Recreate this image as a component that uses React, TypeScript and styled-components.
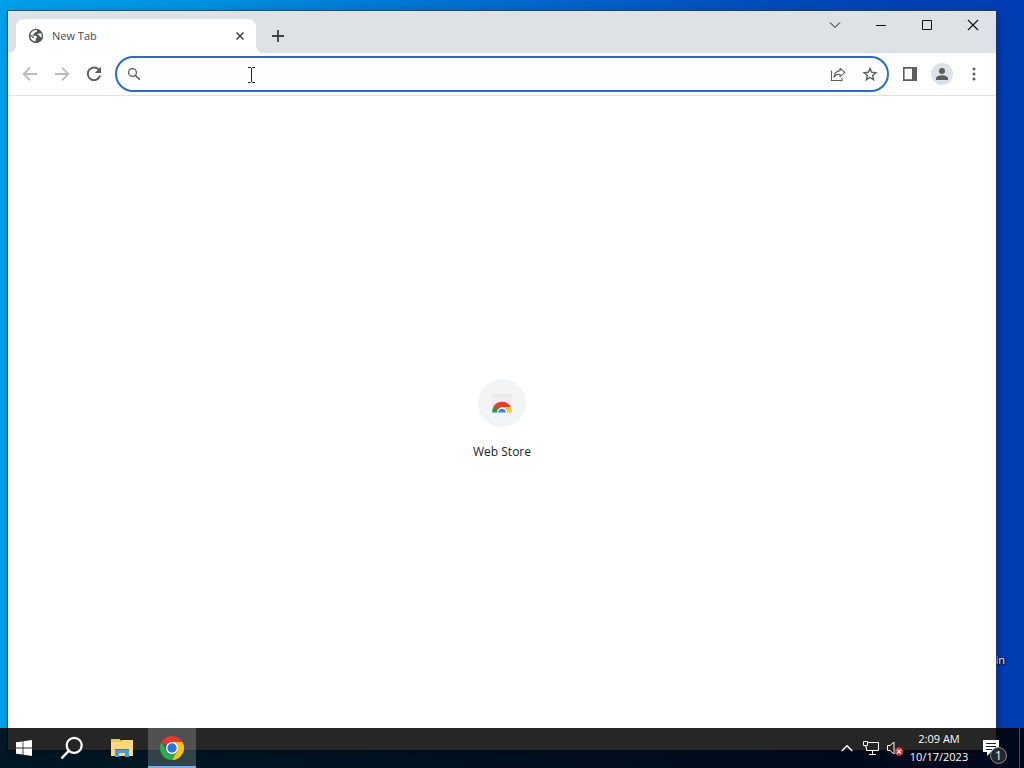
import React from "react";
import styled, { createGlobalStyle } from "styled-components";

const GlobalStyle = createGlobalStyle`
  * { box-sizing: border-box; }
  body { margin: 0; font-family: "Open Sans", "Noto Sans", sans-serif; }
  button, input { font: inherit; color: inherit; border: 0; padding: 0; background: none; }
  svg { display: block; }
`;

const Desktop = styled.div`
  position: relative;
  display: flex;
  flex-direction: column;
  min-height: 100vh;
  overflow: hidden;
  background: linear-gradient(90deg, #00a0ea 0%, #0092e0 18%, #007ad4 36%, #0060c8 58%, #0048b8 78%, #003cb2 100%);
`;

const ShortcutLabel = styled.span`
  position: absolute;
  top: 652px;
  right: 19px;
  font-size: 11px;
  line-height: 16px;
  color: #fff;
  text-shadow: 1px 1px 2px #000, 0 0 2px #000;
`;

const Window = styled.main`
  position: relative;
  display: flex;
  flex-direction: column;
  flex: 1;
  margin: 11px 28px -22px 8px;
  background: #fff;
  box-shadow: 0 0 0 1px rgba(50, 60, 80, 0.65), 2px 2px 8px rgba(0, 0, 40, 0.35);
`;

const TabStrip = styled.header`
  display: flex;
  align-items: flex-end;
  height: 42px;
  padding-left: 8px;
  background: #dee1e6;
`;

const Tab = styled.div`
  position: relative;
  display: flex;
  align-items: center;
  gap: 8px;
  width: 240px;
  height: 34px;
  padding: 0 8px 0 12px;
  border-radius: 8px 8px 0 0;
  background: #fff;
  color: #45484d;
  line-height: 16px;

  &::before,
  &::after {
    content: "";
    position: absolute;
    bottom: 0;
    width: 8px;
    height: 8px;
  }
  &::before {
    left: -8px;
    background: radial-gradient(circle at 0 0, transparent 8px, #fff 8px);
  }
  &::after {
    right: -8px;
    background: radial-gradient(circle at 100% 0, transparent 8px, #fff 8px);
  }
`;

const TabTitle = styled.span`
  flex: 1;
  font-size: 11px;
`;

const IconButton = styled.button<{ $size?: number; $tone?: string }>`
  display: flex;
  flex: none;
  align-items: center;
  justify-content: center;
  width: ${(p) => p.$size ?? 32}px;
  height: ${(p) => p.$size ?? 32}px;
  color: ${(p) => p.$tone ?? "#5a5d62"};
`;

const NewTabButton = styled(IconButton)`
  margin: 0 0 1px 6px;
`;

const Captions = styled.div`
  display: flex;
  align-self: flex-start;
  margin-left: auto;
`;

const CaptionButton = styled.button`
  display: flex;
  align-items: center;
  justify-content: center;
  width: 46px;
  height: 28px;
  color: #111;
`;

const Toolbar = styled.nav`
  display: flex;
  align-items: center;
  height: 43px;
  padding: 0 6px;
  border-bottom: 1px solid #dfe1e5;
`;

const Omnibox = styled.label`
  display: flex;
  flex: 1;
  align-items: center;
  height: 36px;
  margin: 0 5px;
  padding: 0 1px 0 10px;
  border: 2px solid #2b6cc4;
  border-radius: 18px;
  color: #5a5d62;
`;

const Address = styled.input`
  flex: 1;
  min-width: 0;
  height: 28px;
  margin-left: 8px;
  outline: none;
  font-size: 13px;
`;

const Avatar = styled.span`
  display: flex;
  align-items: center;
  justify-content: center;
  width: 22px;
  height: 22px;
  border-radius: 50%;
  background: #dee1e6;
`;

const Page = styled.section`
  display: flex;
  flex: 1;
  align-items: center;
  justify-content: center;
  padding-bottom: 8px;
`;

const StoreLink = styled.a`
  display: flex;
  flex-direction: column;
  align-items: center;
  gap: 17px;
  color: #202124;
  font-size: 12px;
  line-height: 16px;
  text-decoration: none;
`;

const StoreTile = styled.span`
  display: flex;
  align-items: center;
  justify-content: center;
  width: 48px;
  height: 48px;
  border-radius: 50%;
  background: #f3f4f6;
`;

const TextCursor = styled.svg`
  position: absolute;
  left: 239px;
  top: 56px;
  pointer-events: none;
`;

const Taskbar = styled.footer`
  position: relative;
  display: flex;
  height: 40px;
  background: rgba(0, 0, 0, 0.85);
  color: #fff;
`;

const TaskButton = styled.button<{ $active?: boolean }>`
  display: flex;
  align-items: center;
  justify-content: center;
  width: 48px;
  height: 40px;
  background: ${(p) => (p.$active ? "rgba(255, 255, 255, 0.2)" : "none")};
  box-shadow: ${(p) => (p.$active ? "inset 0 -2px #76b0e6" : "none")};
  color: #fff;
`;

const TaskGroup = styled.div`
  display: flex;
  gap: 2px;
  margin-left: 2px;
`;

const Tray = styled.div`
  display: flex;
  align-items: center;
  margin-left: auto;
`;

const TrayButton = styled.button`
  display: flex;
  align-items: center;
  justify-content: center;
  width: 24px;
  height: 40px;
  color: #fff;
`;

const Clock = styled.button`
  width: 64px;
  font-size: 11px;
  line-height: 18px;
  text-align: center;
  white-space: nowrap;
  color: #fff;
`;

const Notifications = styled(TrayButton)`
  position: relative;
  width: 48px;
  padding-right: 8px;
`;

const Badge = styled.span`
  position: absolute;
  right: 12px;
  bottom: 4px;
  width: 17px;
  height: 17px;
  border: 1px solid #8b9097;
  border-radius: 50%;
  background: #26282d;
  font-size: 12px;
  line-height: 15px;
  text-align: center;
`;

const ShowDesktop = styled.button`
  width: 5px;
  height: 40px;
  border-left: 1px solid #4a5360;
`;

const ChromeLogo = () => (
  <svg width="24" height="24" viewBox="0 0 48 48" aria-hidden="true">
    <path fill="#e33b2e" d="M24 24 3.2 12A24 24 0 0 1 44.8 12H24z" />
    <path fill="#fbc116" d="M24 12h20.8A24 24 0 0 1 24 48l10.4-18z" />
    <path fill="#2da94f" d="M3.2 12 13.6 30 24 36 24 48A24 24 0 0 1 3.2 12z" />
    <path fill="#2da94f" d="M24 48 34.4 30 24 34 13.6 30z" />
    <circle cx="24" cy="24" r="12" fill="#fff" />
    <circle cx="24" cy="24" r="9.4" fill="#2f73e0" />
  </svg>
);

export default function App() {
  return (
    <Desktop>
      <GlobalStyle />
      <ShortcutLabel>in</ShortcutLabel>
      <Window>
        <TabStrip>
          <Tab>
            <svg width="16" height="16" viewBox="0 0 16 16" aria-hidden="true">
              <circle cx="8" cy="8" r="7.2" fill="#505357" />
              <path fill="#fff" d="M9 2.2 8.8 4 6.6 4.6 6.3 6.2 4.6 6.6 4.9 7.7 8.2 7.8 9.2 9.5 7.8 10.5 7.6 13.6A5.8 5.8 0 0 1 2.3 7.6L5 10.2 6.4 9.6 2.5 6.4A5.8 5.8 0 0 1 9 2.2z M10.4 5.4 13 5.3A5.8 5.8 0 0 1 13.6 9.4L11.8 8.8 11.3 7.4 9.4 6.8z" />
            </svg>
            <TabTitle>New Tab</TabTitle>
            <IconButton $size={16} $tone="#3c4043" aria-label="Close tab">
              <svg width="8" height="8" viewBox="0 0 8 8" stroke="currentColor" strokeWidth="1.5">
                <path d="m.5.5 7 7m0-7-7 7" />
              </svg>
            </IconButton>
          </Tab>
          <NewTabButton $tone="#3c4043" aria-label="New tab">
            <svg width="12" height="12" viewBox="0 0 12 12" stroke="currentColor" strokeWidth="1.8">
              <path d="M6 0v12M0 6h12" />
            </svg>
          </NewTabButton>
          <Captions>
            <CaptionButton aria-label="Search tabs">
              <svg width="12" height="8" viewBox="0 0 12 8" fill="none" stroke="currentColor" strokeWidth="1">
                <path d="m1 1.5 5 5 5-5" />
              </svg>
            </CaptionButton>
            <CaptionButton aria-label="Minimize">
              <svg width="10" height="2" viewBox="0 0 10 2"><path fill="currentColor" d="M0 1h10v1H0z" /></svg>
            </CaptionButton>
            <CaptionButton aria-label="Maximize">
              <svg width="10" height="10" viewBox="0 0 10 10" fill="none" stroke="currentColor"><path d="M.5.5h9v9h-9z" /></svg>
            </CaptionButton>
            <CaptionButton aria-label="Close">
              <svg width="12" height="12" viewBox="0 0 12 12" stroke="currentColor" strokeWidth="1.1"><path d="m1 1 10 10M11 1 1 11" /></svg>
            </CaptionButton>
          </Captions>
        </TabStrip>

        <Toolbar>
          <IconButton $tone="#b8babd" aria-label="Back">
            <svg width="16" height="16" viewBox="0 0 16 16" fill="none" stroke="currentColor" strokeWidth="1.8"><path d="M15 8H2M8 1.7 1.7 8 8 14.3" /></svg>
          </IconButton>
          <IconButton $tone="#b8babd" aria-label="Forward">
            <svg width="16" height="16" viewBox="0 0 16 16" fill="none" stroke="currentColor" strokeWidth="1.8"><path d="M1 8h13M8 1.7 14.3 8 8 14.3" /></svg>
          </IconButton>
          <IconButton aria-label="Reload">
            <svg width="16" height="16" viewBox="0 0 16 16" fill="none" stroke="currentColor" strokeWidth="1.9">
              <path d="M13.1 4A6.3 6.3 0 1 0 14.1 9.6" />
              <path fill="currentColor" stroke="none" d="M15 .8v6.3H8.8z" />
            </svg>
          </IconButton>
          <Omnibox>
            <svg width="14" height="14" viewBox="0 0 14 14" fill="none" stroke="currentColor" aria-hidden="true">
              <circle cx="5.5" cy="5.5" r="3.9" strokeWidth="1.3" />
              <path d="m8.4 8.4 4.4 4.4" strokeWidth="1.5" />
            </svg>
            <Address aria-label="Address and search bar" />
            <IconButton aria-label="Share this page">
              <svg width="16" height="16" viewBox="0 0 16 16" fill="none" stroke="currentColor" strokeWidth="1.1">
                <path d="M1.5 4.5v10H12v-3" />
                <path strokeLinejoin="round" d="M10 2.2 14.8 6.4 10 10.6V8.3C7.3 8.1 5.4 9 3.9 11.2c.4-3.6 2.6-6 6.1-6.6z" />
              </svg>
            </IconButton>
            <IconButton aria-label="Bookmark this tab">
              <svg width="16" height="16" viewBox="0 0 16 16" fill="none" stroke="currentColor" strokeWidth="1.4">
                <path d="m8 2.4 1.7 3.9 4.2.4-3.2 2.8.9 4.2L8 11.5l-3.6 2.2.9-4.2-3.2-2.8 4.2-.4z" />
              </svg>
            </IconButton>
          </Omnibox>
          <IconButton aria-label="Side panel">
            <svg width="14" height="14" viewBox="0 0 14 14"><path fill="currentColor" fillRule="evenodd" d="M0 0h14v14H0zM1.6 1.8v10.4H9V1.8z" /></svg>
          </IconButton>
          <IconButton aria-label="Profile">
            <Avatar>
              <svg width="12" height="12" viewBox="0 0 12 12" fill="currentColor"><circle cx="6" cy="3" r="3" /><path d="M0 12v-1.6C0 8.3 3.7 7.3 6 7.3s6 1 6 3.1V12z" /></svg>
            </Avatar>
          </IconButton>
          <IconButton aria-label="Menu">
            <svg width="4" height="14" viewBox="0 0 4 14" fill="currentColor"><circle cx="2" cy="2" r="1.5" /><circle cx="2" cy="7" r="1.5" /><circle cx="2" cy="12" r="1.5" /></svg>
          </IconButton>
        </Toolbar>

        <Page>
          <StoreLink href="#web-store">
            <StoreTile>
              <svg width="24" height="24" viewBox="0 0 24 24" aria-hidden="true">
                <path fill="#eceef0" d="M2 3h20v19H2z" />
                <path fill="#e8eaec" d="M2 3h20v3H2z" />
                <path fill="#249a52" d="M2.2 21.5A10 10 0 0 1 4 15l4.2 2.6-.9 3.9z" />
                <path fill="#fbcb2c" d="M13 16h7.8a10 10 0 0 1 1 5.5H13z" />
                <path fill="#d8452f" d="M3.5 15.8A9.8 9.8 0 0 1 20.8 16H12l-4.4 2.8z" />
                <path fill="#fff" d="M7 21.5a5 5 0 0 1 10 0z" />
                <path fill="#3f82ee" d="M8.2 21.5a3.8 3.8 0 0 1 7.6 0z" />
              </svg>
            </StoreTile>
            Web Store
          </StoreLink>
        </Page>
        <TextCursor width="9" height="16" viewBox="0 0 9 16" fill="none" stroke="#222" aria-hidden="true">
          <path d="M1 .5h2.5l1 1 1-1H8M4.5 1v14M1 15.5h2.5l1-1 1 1H8" />
        </TextCursor>
      </Window>

      <Taskbar>
        <TaskButton aria-label="Start">
          <svg width="16" height="16" viewBox="0 0 16 16" fill="currentColor"><path d="M0 2.3 6.6 1.4v6.2H0zM7.4 1.3 16 0v7.6H7.4zM0 8.4h6.6v6.2L0 13.7zM7.4 8.4H16V16l-8.6-1.3z" /></svg>
        </TaskButton>
        <TaskButton aria-label="Search">
          <svg width="24" height="24" viewBox="0 0 24 24" fill="none" stroke="currentColor"><circle cx="14.2" cy="9.3" r="7.5" strokeWidth="2.2" /><path d="m8.8 14.8-7.3 7.5" strokeWidth="2.4" /></svg>
        </TaskButton>
        <TaskGroup>
          <TaskButton aria-label="File Explorer">
            <svg width="22" height="20" viewBox="0 0 22 20">
              <path fill="#e3a52d" d="M0 1h8l2 2h12v6H0z" />
              <path fill="#ffd978" d="M0 4h9l2-2h11v16H0z" />
              <path fill="#f5c452" d="M0 1h8.5L10 3 9 4H0z" />
              <path fill="#4a9bd8" d="M4 11h14v8h-4v-4H8v4H4z" />
              <path fill="#2f7fc0" d="M4 11h14v1H4z" />
            </svg>
          </TaskButton>
          <TaskButton $active aria-label="Google Chrome"><ChromeLogo /></TaskButton>
        </TaskGroup>

        <Tray>
          <TrayButton aria-label="Show hidden icons">
            <svg width="12" height="8" viewBox="0 0 12 8" fill="none" stroke="currentColor" strokeWidth="1.4"><path d="m.7 7 5.3-5.3L11.3 7" /></svg>
          </TrayButton>
          <TrayButton aria-label="Network">
            <svg width="16" height="14" viewBox="0 0 16 14" fill="none" stroke="currentColor"><path d="M5 1.5h10.5v8h-12V6M9.5 9.5v4M6 13.5h7M.5.5h4v4h-4zM2.5 4.5V6h1" /></svg>
          </TrayButton>
          <TrayButton aria-label="Volume">
            <svg width="18" height="16" viewBox="0 0 18 16">
              <path fill="none" stroke="#fff" d="M1.5 5.5H4L8 2v12L4 10.5H1.5z" />
              <circle cx="13" cy="11.5" r="4.3" fill="#d23b45" />
              <path stroke="#fff" strokeWidth="1.2" d="m11.2 9.7 3.6 3.6m0-3.6-3.6 3.6" />
            </svg>
          </TrayButton>
          <Clock>2:09 AM<br />10/17/2023</Clock>
          <Notifications aria-label="Notifications">
            <svg width="16" height="16" viewBox="0 0 16 16"><path fill="#fff" d="M0 0h16v12H8l-4 4v-4H0z" /><path stroke="#222" d="M3 3.5h10M3 6.5h10M3 9.5h6" /></svg>
            <Badge>1</Badge>
          </Notifications>
          <ShowDesktop aria-label="Show desktop" />
        </Tray>
      </Taskbar>
    </Desktop>
  );
}
